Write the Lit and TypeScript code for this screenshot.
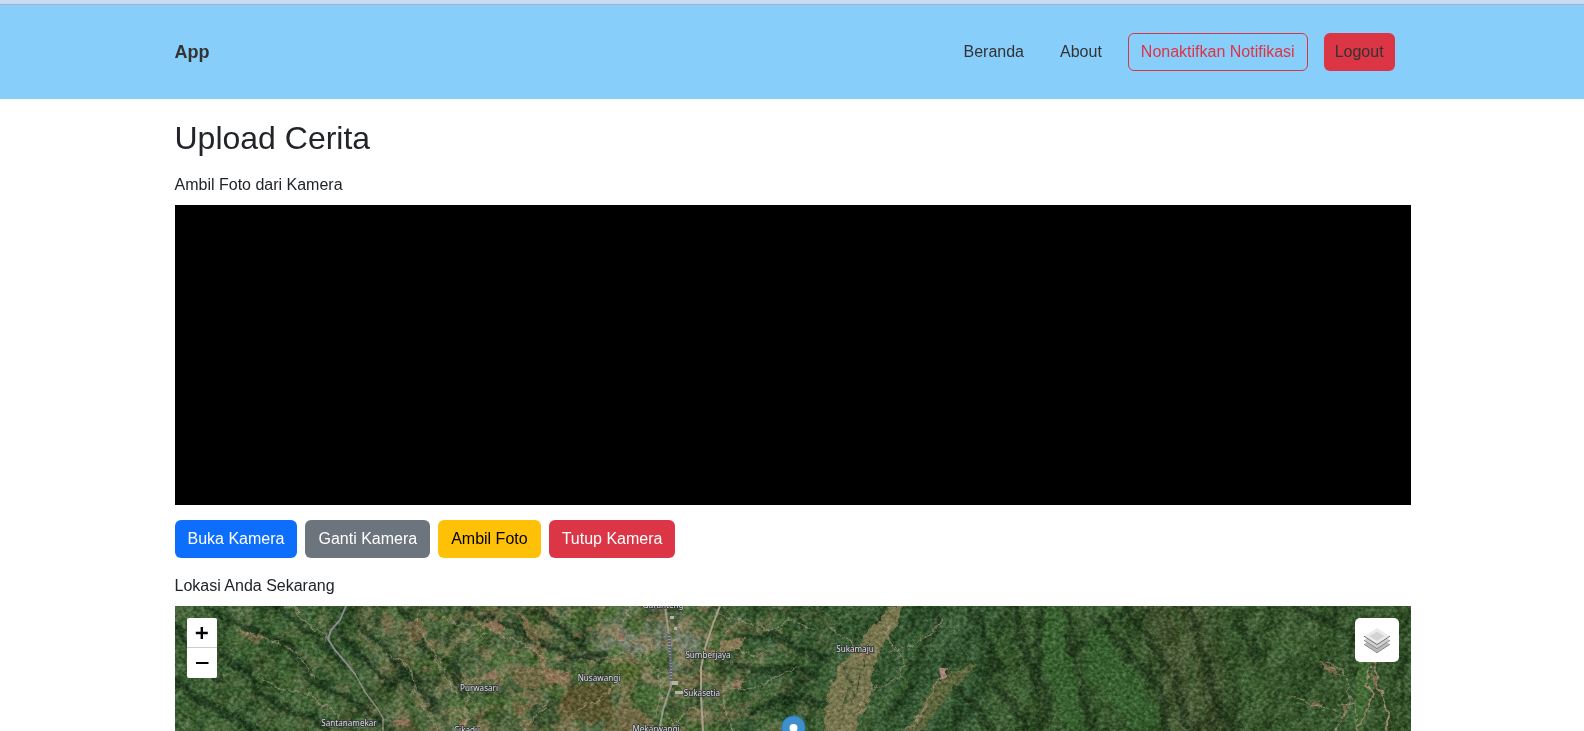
import { LitElement, html, css, svg } from "lit";
import { customElement } from "lit/decorators.js";

type Place = { name: string; x: number; y: number };

const PLACES: Place[] = [
  { name: "Guranteng", x: 488, y: 2 },
  { name: "Sumberjaya", x: 533, y: 52 },
  { name: "Nusawangi", x: 424, y: 75 },
  { name: "Sukasetia", x: 527, y: 89.5 },
  { name: "Purwasari", x: 304, y: 85 },
  { name: "Santanamekar", x: 174, y: 119.5 },
  { name: "Cikadu", x: 292, y: 126.5 },
  { name: "Mekarwangi", x: 481, y: 125.5 },
  { name: "Sukamaju", x: 680, y: 46 },
];

// Valley shadows that run down the western hills
const RIDGES = [
  "M30,0 C45,12 75,22 95,30 S120,45 132,66 S165,82 182,98 S205,115 215,125",
  "M45,50 C60,60 70,55 78,75 S95,95 115,104 S140,110 152,125",
  "M0,75 C20,95 45,105 60,112 S75,120 80,125",
  "M100,0 C115,12 128,20 140,32 S160,50 168,60",
  "M160,18 C170,36 180,44 192,54 S205,72 218,80",
  "M185,20 C205,35 215,52 230,65 S250,90 262,104",
  "M0,20 C15,40 20,55 45,72",
  "M225,0 C245,20 240,45 265,52 S275,80 290,88",
  "M290,0 C305,15 330,15 345,25 S370,40 385,45 S405,55 430,50",
  "M360,5 C385,15 392,30 410,42",
  "M580,30 C600,20 620,45 650,52",
  "M560,60 C590,70 610,55 640,70",
  "M575,105 C600,95 620,88 645,98",
];

const FOREST_RIDGES = [
  "M760,0 C770,20 745,45 735,60",
  "M800,10 C815,30 810,50 830,66",
  "M838,0 C848,22 846,50 862,70 S870,110 862,125",
  "M868,0 C862,30 865,60 858,84",
  "M890,0 C900,30 894,60 905,85 S910,110 920,125",
  "M927,15 C945,30 960,60 975,70 S985,100 990,125",
  "M950,0 C965,25 985,40 990,65",
  "M1015,0 C1018,30 1035,60 1040,90 S1060,115 1065,125",
  "M1060,10 C1070,30 1085,45 1082,60",
  "M820,80 C835,95 845,105 850,125",
  "M780,85 C800,95 810,110 815,125",
  "M1000,70 C1010,90 1004,110 1015,125",
  "M1120,0 C1140,10 1165,15 1180,35",
];

// Sunlit slopes between the forest ridges
const SLOPES = [
  "M60,30 C80,45 100,55 118,80",
  "M10,105 C30,112 45,118 55,125",
  "M120,20 C130,32 142,50 155,62",
  "M815,20 C825,50 835,70 850,95",
  "M925,0 C938,20 950,35 965,45",
  "M1000,5 C1008,40 1020,70 1028,110",
  "M1095,30 C1115,38 1130,48 1145,52",
  "M1070,70 C1085,85 1095,100 1100,120",
  "M740,70 C725,85 700,100 690,120",
  "M750,30 C740,42 735,48 728,60",
];

const PATHS = [
  "M116,0 L135,20 152,33",
  "M60,24 L90,32 115,42 130,58 140,72",
  "M86,72 L105,84 120,84 140,93 160,106 172,118",
  "M215,50 L232,60 240,82 250,100 262,125",
  "M245,0 L242,20 255,40 270,68 280,90",
  "M265,10 L280,18 310,20 M275,35 L300,36 312,28",
  "M295,85 L290,100 290,125",
  "M310,20 L330,30 355,42 370,56 M365,67 L395,72",
  "M405,54 L435,54 448,46 470,50 480,64 500,68",
  "M440,34 L470,38 485,42 500,35",
  "M455,0 L445,20 440,34",
  "M375,92 L360,110 350,125",
  "M400,105 L430,90 445,66",
  "M485,68 L486,90 480,110",
  "M490,106 L498,118 506,110 515,102 535,110",
  "M545,10 L575,18 590,25 615,15 640,22",
  "M552,40 L580,50 600,44 M545,80 L570,84 590,78 620,62",
  "M548,85 L550,105 558,125",
  "M655,22 L672,32 680,40",
  "M715,18 L712,35 725,48 730,60 722,72 690,88 682,108",
  "M715,46 L740,38 755,28 770,12",
  "M765,68 L755,90 742,115 730,125",
  "M1150,54 L1166,63 1172,78 1176,98 1164,114 1162,125",
  "M1115,90 L1135,98 1163,105",
  "M1162,98 L1180,99 1182,118",
];

@customElement("terrain-map")
export class TerrainMap extends LitElement {
  static styles = css`
    :host {
      display: block;
      position: relative;
      height: 400px;
      overflow: hidden;
      background: #2c4628;
    }
    .tiles {
      display: block;
    }
    .place {
      font: 8.1px "Noto Sans", sans-serif;
      fill: #dcdcdc;
      stroke: #33363a;
      stroke-width: 1.5px;
      paint-order: stroke;
      text-anchor: middle;
    }
    .soft-light {
      mix-blend-mode: soft-light;
    }
    .zoom {
      position: absolute;
      left: 12px;
      top: 12px;
      width: 30px;
      border-radius: 2px;
      background: #fff;
      display: flex;
      flex-direction: column;
    }
    .step {
      height: 29px;
      padding: 0;
      border: 0;
      background: none;
      display: grid;
      place-items: center;
    }
    .step + .step {
      border-top: 1px solid #ccc;
      height: 31px;
    }
    .layers {
      position: absolute;
      right: 12px;
      top: 12px;
      width: 44px;
      height: 44px;
      border-radius: 5px;
      background: #fff;
      display: grid;
      place-items: center;
    }
    .pin {
      position: absolute;
      left: 606px;
      top: 109px;
    }
  `;

  private line(d: string, color: string, width: number, opacity = 1) {
    return svg`<path d=${d} fill="none" stroke=${color} stroke-width=${width} stroke-opacity=${opacity} stroke-linejoin="round" stroke-linecap="round"></path>`;
  }

  render() {
    return html`
      <svg class="tiles" width="1236" height="125" viewBox="0 0 1236 125">
        <defs>
          <filter id="relief" x="0" y="0" width="100%" height="100%" color-interpolation-filters="sRGB">
            <feTurbulence type="fractalNoise" baseFrequency="0.022 0.016" numOctaves="4" seed="8" result="n"></feTurbulence>
            <feColorMatrix in="n" values="0 0 0 0 0  0 0 0 0 0  0 0 0 0 0  1 0 0 0 0"></feColorMatrix>
            <feDiffuseLighting surfaceScale="11" diffuseConstant="0.85" lighting-color="#ffffff">
              <feDistantLight azimuth="225" elevation="42"></feDistantLight>
            </feDiffuseLighting>
          </filter>
          <filter id="grain" x="0" y="0" width="100%" height="100%" color-interpolation-filters="sRGB">
            <feTurbulence type="fractalNoise" baseFrequency="0.27 0.31" numOctaves="3" seed="21"></feTurbulence>
            <feColorMatrix values="1.3 0 0 0 -.14  1.3 0 0 0 -.14  1.3 0 0 0 -.14  0 0 0 0 1"></feColorMatrix>
          </filter>
          <filter id="fields" x="0" y="0" width="100%" height="100%" color-interpolation-filters="sRGB">
            <feTurbulence type="fractalNoise" baseFrequency="0.05 0.06" numOctaves="4" seed="4"></feTurbulence>
            <feColorMatrix values="0 0 0 0 .50  0 0 0 0 .46  0 0 0 0 .31  9 0 0 0 -4.5"></feColorMatrix>
          </filter>
          <filter id="crops" x="0" y="0" width="100%" height="100%" color-interpolation-filters="sRGB">
            <feTurbulence type="fractalNoise" baseFrequency="0.04 0.045" numOctaves="3" seed="15"></feTurbulence>
            <feColorMatrix values="0 0 0 0 .28  0 0 0 0 .40  0 0 0 0 .19  0 7 0 0 -3.2"></feColorMatrix>
          </filter>
          <filter id="rough" x="-5%" y="-5%" width="110%" height="110%">
            <feTurbulence type="fractalNoise" baseFrequency="0.12" numOctaves="3" seed="3" result="n"></feTurbulence>
            <feDisplacementMap in="SourceGraphic" in2="n" scale="9" xChannelSelector="R" yChannelSelector="G"></feDisplacementMap>
          </filter>
          <filter id="soft" x="-20%" y="-20%" width="140%" height="140%" color-interpolation-filters="sRGB"><feGaussianBlur stdDeviation="10"></feGaussianBlur></filter>
          <filter id="edge" x="-20%" y="-20%" width="140%" height="140%" color-interpolation-filters="sRGB">
            <feGaussianBlur stdDeviation="1.2" result="b"></feGaussianBlur>
            <feTurbulence type="fractalNoise" baseFrequency="0.09" numOctaves="3" seed="9" result="n"></feTurbulence>
            <feDisplacementMap in="b" in2="n" scale="14" xChannelSelector="R" yChannelSelector="G"></feDisplacementMap>
          </filter>
          <linearGradient id="farm">
            <stop offset="0" stop-color="#fff" stop-opacity=".15"></stop>
            <stop offset=".14" stop-color="#fff" stop-opacity=".45"></stop>
            <stop offset=".24" stop-color="#fff" stop-opacity="1"></stop>
            <stop offset=".42" stop-color="#fff" stop-opacity="1"></stop>
            <stop offset=".5" stop-color="#fff" stop-opacity=".4"></stop>
            <stop offset=".56" stop-color="#fff" stop-opacity=".12"></stop>
            <stop offset=".6" stop-color="#fff" stop-opacity="0"></stop>
          </linearGradient>
          <mask id="farmland"><rect width="1236" height="125" fill="url(#farm)"></rect></mask>
        </defs>

        <rect width="1236" height="125" fill="#35572d"></rect>
        <g filter="url(#soft)">
          <rect x="190" y="-20" width="370" height="165" fill="#445b36"></rect>
          <path d="M570,-20 H830 V145 H560Z" fill="#2e502a"></path>
          <path d="M830,-20 H1266 V145 H800Z" fill="#325128"></path>
          <path d="M960,-20 H1030 L1060,145 H1000Z" fill="#3b4c29"></path>
          <ellipse cx="475" cy="38" rx="55" ry="25" fill="#727c68"></ellipse>
        </g>
        <g mask="url(#farmland)">
          <rect width="1236" height="125" filter="url(#crops)" opacity=".85"></rect>
          <rect width="1236" height="125" filter="url(#fields)" opacity=".7"></rect>
        </g>

        <rect class="soft-light" width="1236" height="125" filter="url(#relief)" opacity=".55"></rect>

        <g filter="url(#edge)">
          ${RIDGES.map((d) => this.line(d, "#142b16", 7, 0.65))}
          ${FOREST_RIDGES.map((d) => this.line(d, "#1a2e16", 8, 0.6))}
          ${SLOPES.map((d) => this.line(d, "#4a7038", 7, 0.35))}
          <path d="M868,0 L888,0 Q890,40 904,80 L910,125 L890,125 Q875,70 868,60Z" fill="#38632f" opacity=".75"></path>
          <path d="M912,30 L930,20 Q940,50 965,72 L985,118 L960,125 Q930,90 912,75Z" fill="#37622f" opacity=".75"></path>
          <path d="M1185,50 L1198,55 1195,90 1188,125 1176,125 1180,90Z" fill="#426a34"></path>
          <path d="M395,80 L440,78 436,118 410,112 385,105Z" fill="#5c5228" opacity=".75"></path>
          <path d="M435,60 L468,58 462,76 440,76Z" fill="#53672f"></path>
          <path d="M462,80 L486,82 482,98 462,96Z" fill="#466a34"></path>
        </g>

        <g filter="url(#rough)">
          <path d="M716,0 L728,0 722,18 706,42 698,64 696,90 684,112 682,125 648,125 652,92 664,58 682,44 692,26Z" fill="#77744d"></path>
          <path d="M670,60 L676,78 668,100 M690,50 L684,80 676,95" fill="none" stroke="#4a5a37" stroke-width="2"></path>
          <path d="M804,57 L790,70 774,88 760,108 748,125 732,125 745,102 757,80 776,66Z" fill="#5c653a"></path>
          <path d="M765,62 L772,60 772,70 764,74Z" fill="#a58274"></path>
          <path d="M545,35 L570,32 564,44 545,46Z" fill="#857852"></path>
          <path d="M210,5 L222,15 215,28 203,20Z M232,18 L246,8 252,28 238,38Z M60,24 L95,30 80,38Z M350,15 L368,28 362,38 350,28Z M330,70 L352,60 380,62 390,78 350,84Z M335,95 L360,100 345,112Z M385,100 L405,112 390,122Z M430,102 L470,105 478,122 445,122Z" fill="#7c6c4a" opacity=".75"></path>
          <path d="M318,12 L330,22 322,30 312,20Z M338,4 L356,14 350,18Z M438,24 L450,26 446,38Z M355,40 L372,54 366,60Z M372,64 L394,66 392,80 370,74Z M215,120 L228,108 235,118Z M283,110 L296,114 288,124Z M308,70 L320,62 324,74Z M530,45 L540,42 538,60Z M1143,54 L1160,62 1166,70 1150,64Z M1132,96 L1148,98 1142,101Z M1168,100 L1174,96 1166,118Z M1196,70 L1201,68 1203,84Z M678,48 L696,46 692,52Z M555,76 L570,74 565,84Z" fill="#96745a" opacity=".8"></path>
          ${PATHS.map((d) => this.line(d, "#a99a83", 1.2, 0.62))}
          ${this.line("M1206,42 L1200,60 1204,82 1212,100 1212,125 M1195,60 L1192,78 1198,92 1188,112 1182,125", "#a08870", 2.2, 0.85)}
        </g>
        <rect class="soft-light" width="1236" height="125" filter="url(#grain)" opacity=".6"></rect>

        ${this.line("M171,0 L165,14 156,24 153,33 160,44 172,58 180,68", "#9b94a4", 1.9, 0.85)}
        ${this.line("M180,68 L190,86 202,102 208,112 208,125", "#aaa392", 1.4, 0.75)}
        ${this.line("M490,0 L494,30 496,62 496,80 488,104 484,125", "#a7a59f", 2, 0.8)}
        ${this.line("M545,0 L538,18 530,42 526,62 526,90 528,125", "#bba898", 2, 0.85)}
        <path d="M495,10 h4 v3 h-4z M499,21 h3 v3 h-3z M497,75 h6 v4 h-6z M500,85 h8 v3 h-8z" fill="#b5b5a6"></path>
        <path d="M494,28 L496,62 496,76" fill="none" stroke="#5e607a" stroke-width="3" stroke-dasharray="2 1"></path>
        ${PLACES.map((p) => svg`<text class="place" x=${p.x} y=${p.y}>${p.name}</text>`)}
      </svg>

      <svg class="pin" width="25" height="41" viewBox="0 0 25 41">
        <path d="M12.5,1 C6,1 .8,6 .8,12.5 C.8,19 8,26 12.5,40 C17,26 24.2,19 24.2,12.5 C24.2,6 19,1 12.5,1Z" fill="#3d8fcd" stroke="#3178ae" stroke-width="1"></path>
        <circle cx="12.5" cy="13" r="4" fill="#fff"></circle>
      </svg>

      <div class="zoom">
        <button class="step" aria-label="Zoom in">
          <svg width="14" height="14" viewBox="0 0 14 14"><path d="M.8,7 H12.8 M6.8,1 V13" stroke="#000" stroke-width="2.4"></path></svg>
        </button>
        <button class="step" aria-label="Zoom out">
          <svg width="14" height="14" viewBox="0 0 14 14"><path d="M1,7 H13.5" stroke="#000" stroke-width="2"></path></svg>
        </button>
      </div>
      <div class="layers">
        <svg width="26" height="26" viewBox="0 0 26 26">
          <path d="M0,17.3 L13,25.7 26,17.3 23,15.5 13,21 3,15.5Z" fill="#b9b9b9"></path>
          <path d="M0,17.3 L13,25.7 26,17.3" fill="none" stroke="#8a8a8a"></path>
          <path d="M0,13.3 L13,21.7 26,13.3 23,11.5 13,17 3,11.5Z" fill="#cecece"></path>
          <path d="M0,13.3 L13,21.7 26,13.3" fill="none" stroke="#8a8a8a"></path>
          <path d="M13,1 L26,9.2 13,17.3 0,9.2Z" fill="#ebebeb"></path>
          <path d="M13,4.5 L20.5,9.2 13,13.9 5.5,9.2Z" fill="#d3d3d3"></path>
          <path d="M0,9.2 L13,17.5 26,9.2" fill="none" stroke="#6f6f6f"></path>
        </svg>
      </div>
    `;
  }
}

@customElement("app-root")
export class AppRoot extends LitElement {
  static styles = css`
    :host {
      display: block;
      height: 731px;
      overflow: hidden;
      background: #fff;
      color: #212529;
      font: 16px/24px "Liberation Sans", Arial, sans-serif;
    }
    * {
      box-sizing: border-box;
    }
    .strip {
      height: 5px;
      background: #cadbf5;
      border-bottom: 1px solid #a5b2cd;
    }
    .header {
      height: 94px;
      padding: 0 189.4px 0 174.5px;
      background: #87cefa;
      color: #333;
      display: flex;
      align-items: center;
      justify-content: space-between;
    }
    .brand {
      font-size: 18px;
      font-weight: 700;
    }
    .nav {
      display: flex;
      align-items: center;
    }
    .link {
      padding: 0 10px;
      margin-right: 16px;
    }
    .btn {
      font: inherit;
      height: 38px;
      padding: 0 12px;
      border: 1px solid transparent;
      border-radius: 6px;
      color: #fff;
      white-space: nowrap;
    }
    .outline {
      margin-right: 16px;
      background: none;
      border-color: #dc3545;
      color: #dc3545;
    }
    .logout {
      padding: 0 10px;
      color: #333;
    }
    .main {
      padding: 20px 173.5px 0 174.5px;
    }
    .title {
      margin: 0 0 16px;
      font-size: 32px;
      font-weight: 500;
      line-height: 38px;
    }
    .label {
      margin-bottom: 8px;
    }
    .camera {
      height: 300px;
      background: #000;
    }
    .actions {
      display: flex;
      gap: 8px;
      margin: 15px 0 16px;
    }
    .primary { background: #0d6efd; }
    .secondary { background: #6c757d; }
    .warning { background: #ffc107; color: #000; }
    .danger { background: #dc3545; }
  `;

  render() {
    return html`
      <div class="strip"></div>
      <header class="header">
        <span class="brand">App</span>
        <nav class="nav">
          <span class="link">Beranda</span>
          <span class="link">About</span>
          <button class="btn outline">Nonaktifkan Notifikasi</button>
          <button class="btn danger logout">Logout</button>
        </nav>
      </header>
      <main class="main">
        <h2 class="title">Upload Cerita</h2>
        <div class="label">Ambil Foto dari Kamera</div>
        <div class="camera"></div>
        <div class="actions">
          <button class="btn primary">Buka Kamera</button>
          <button class="btn secondary">Ganti Kamera</button>
          <button class="btn warning">Ambil Foto</button>
          <button class="btn danger">Tutup Kamera</button>
        </div>
        <div class="label">Lokasi Anda Sekarang</div>
        <terrain-map></terrain-map>
      </main>
    `;
  }
}
